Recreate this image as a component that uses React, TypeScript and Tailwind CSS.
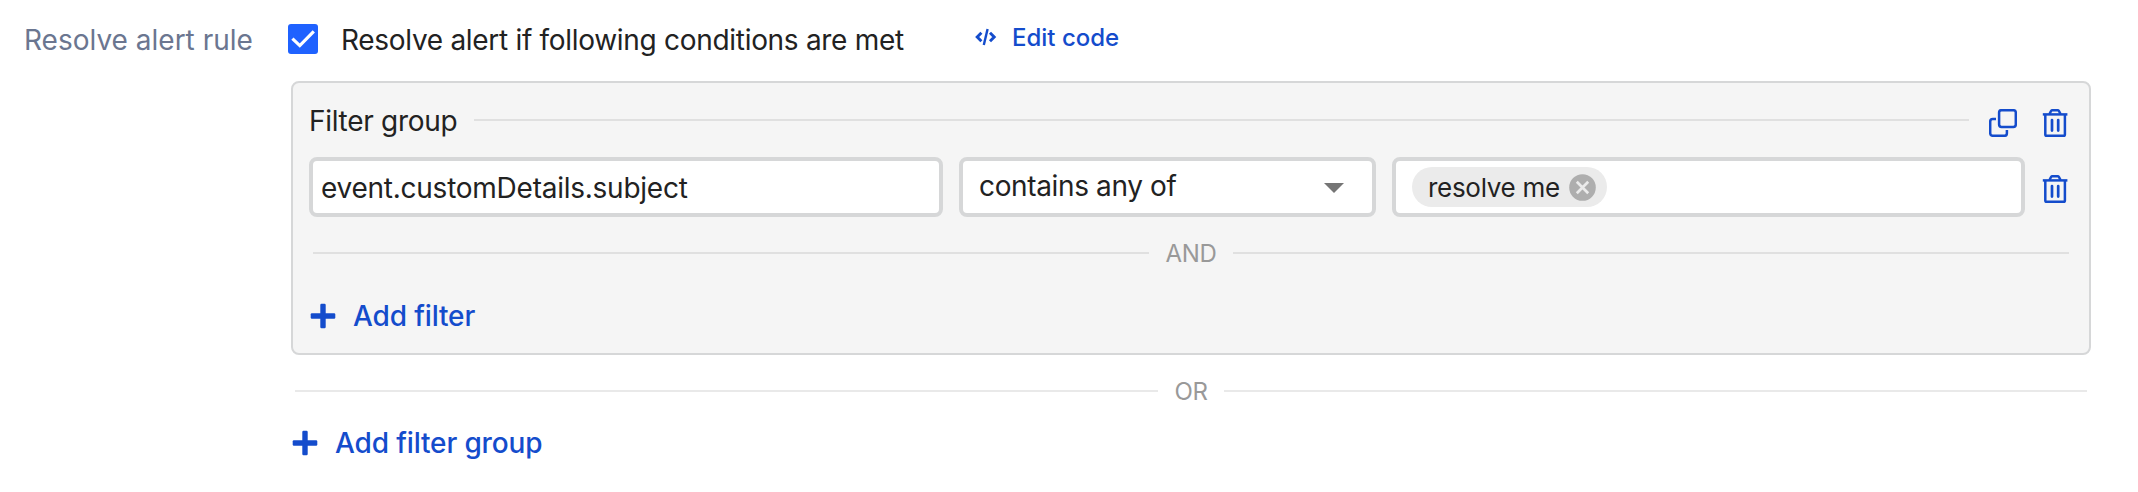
import React from "react";

function Trash() {
  return (
    <svg className="block h-[28px] w-[26px] shrink-0" viewBox="0 0 26 28" fill="none" stroke="#144ccc" strokeWidth="2.5">
      <path d="M0.8 5.4H25.4" />
      <path d="M7.4 5L9 2.1Q9.5 1.3 10.4 1.3H15.6Q16.5 1.3 17 2.1L18.6 5" />
      <path d="M3.3 5.4V25.4Q3.3 26.7 4.6 26.7H21.6Q22.9 26.7 22.9 25.4V5.4" />
      <path d="M10 11V21.6M16.2 11V21.6" strokeWidth="2.7" strokeLinecap="round" />
    </svg>
  );
}

function Copy() {
  return (
    <svg className="block size-[28px] shrink-0" viewBox="0 0 28 28" fill="none" stroke="#144ccc" strokeWidth="2.5">
      <rect x="10.1" y="1.2" width="16.7" height="16.7" rx="2.4" />
      <path d="M7 10.1H3.8Q1.2 10.1 1.2 12.7V24.2Q1.2 26.8 3.8 26.8H15.3Q17.9 26.8 17.9 24.2V21" />
    </svg>
  );
}

function Plus() {
  return (
    <svg className="block size-[26px] shrink-0" viewBox="0 0 26 26" fill="#144ccc">
      <rect x="10.3" y="0.7" width="5.4" height="24.6" rx="1.2" />
      <rect x="0.7" y="10.3" width="24.6" height="5.4" rx="1.2" />
    </svg>
  );
}

function Divider({ label, line }: { label: string; line: string }) {
  return (
    <div className="flex h-8 items-center text-[24px] leading-8 text-[#999999]">
      <div className={`h-0.5 flex-1 ${line}`} />
      <span className="px-4 pt-[2px]">{label}</span>
      <div className={`h-0.5 flex-1 ${line}`} />
    </div>
  );
}

export default function App() {
  return (
    <div className="flex h-[492px] w-[2138px] items-start bg-white font-['Inter',sans-serif] text-[28px] leading-[34px] tracking-[-0.3px] whitespace-nowrap text-[#222222]">
      <div className="w-[291px] shrink-0 pt-[23px] pl-6 tracking-normal text-[#6b7690]">Resolve alert rule</div>
      <div className="w-[1800px] shrink-0">
        <div className="flex h-[81px] items-start">
          <div className="mt-6 -ml-[3px] flex size-[30px] items-center justify-center rounded-[3px] bg-[#1f62ff]">
            <svg className="size-[30px]" viewBox="0 0 30 30" fill="none" stroke="white" strokeWidth="3.2">
              <path d="M4.4 14.6L11.8 21.6L25.8 7.4" />
            </svg>
          </div>
          <span className="mt-[23px] ml-[23px] w-[634px]">Resolve alert if following conditions are met</span>
          <svg className="mt-[28px] h-[18px] w-[22px]" viewBox="0 0 22 18" fill="none" stroke="#144ccc" strokeWidth="2.9">
            <path d="M6.4 4.8L2.2 9L6.4 13.2M15 4.8L19.2 9L15 13.2" />
            <path d="M12.6 1L8.8 17" strokeWidth="2.4" />
          </svg>
          <span className="mt-[22px] ml-[15px] text-[24px] leading-8 font-medium tracking-normal text-[#144ccc]">Edit code</span>
        </div>
        <div className="h-[274px] rounded-[8px] border-2 border-[#d6d7d8] bg-[#f5f5f5] pt-[20px] pl-4">
          <div className="flex h-[36px] items-start">
            <span className="mt-px w-[165px]">Filter group</span>
            <div className="mt-4 h-0.5 w-[1495px] bg-[#e0e0e0]" />
            <div className="mt-[6px] ml-5 flex gap-[25px]">
              <Copy />
              <Trash />
            </div>
          </div>
          <div className="mt-[18px] flex h-[60px] items-center gap-4">
            <div className="flex h-[60px] w-[634px] items-center rounded-[8px] border-4 border-[#d6d7d8] bg-white pt-[2px] pl-2 tracking-[-0.25px]">
              event.customDetails.subject
            </div>
            <div className="flex h-[60px] w-[417px] items-center justify-between rounded-[8px] border-4 border-[#d6d7d8] bg-white pr-7 pl-4">
              <span className="-mt-[2px] tracking-[-0.36px]">contains any of</span>
              <svg className="mt-[2px] h-[10px] w-[20px]" viewBox="0 0 20 10" fill="#757575">
                <path d="M0 0H20L10 10Z" />
              </svg>
            </div>
            <div className="flex h-[60px] w-[633px] items-center rounded-[8px] border-4 border-[#d6d7d8] bg-white pl-4">
              <div className="flex h-[40px] w-[195px] items-center justify-between rounded-full bg-[#ebebeb] pr-[11px] pl-4 text-[26px]">
                <span className="pt-[2px]">resolve me</span>
                <svg className="size-[27px]" viewBox="0 0 27 27">
                  <circle cx="13.5" cy="13.5" r="13.3" fill="#aeaeae" />
                  <path d="M7.8 7.8L19.2 19.2M19.2 7.8L7.8 19.2" stroke="#ebebeb" strokeWidth="2.7" />
                </svg>
              </div>
            </div>
            <div className="mt-[4px] ml-px">
              <Trash />
            </div>
          </div>
          <div className="mt-[20px] ml-1 w-[1756px]">
            <Divider label="AND" line="bg-[#e0e0e0]" />
          </div>
          <div className="mt-[30px] flex h-[34px] items-center gap-[17px] pl-px font-medium tracking-[-0.14px] text-[#144ccc]">
            <Plus />
            <span>Add filter</span>
          </div>
        </div>
        <div className="mt-[20px] ml-1 w-[1792px]">
          <Divider label="OR" line="bg-[#e9e9e9]" />
        </div>
        <div className="mt-[19px] flex h-[34px] items-center gap-[17px] pl-px font-medium tracking-[-0.14px] text-[#144ccc]">
          <Plus />
          <span>Add filter group</span>
        </div>
      </div>
    </div>
  );
}
